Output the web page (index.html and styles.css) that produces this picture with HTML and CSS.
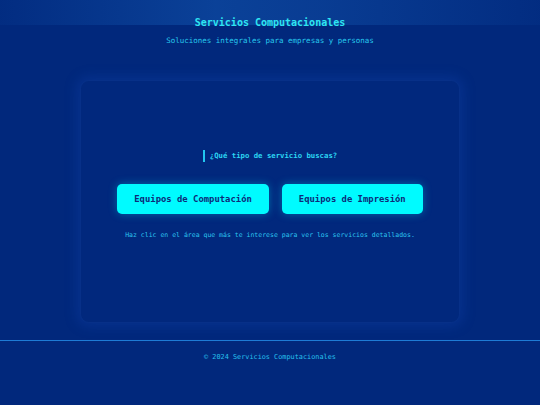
FILE: index.html
```html
<!DOCTYPE html>
<html lang="es">
<head>
<meta charset="utf-8">
<title>Servicios Computacionales</title>
<link rel="stylesheet" href="styles.css">
</head>
<body>
<header class="site-header">
  <h1 class="title">Servicios Computacionales</h1>
  <p class="subtitle">Soluciones integrales para empresas y personas</p>
</header>
<main class="main">
  <section class="card">
    <div class="question-wrap"><h2 class="question">¿Qué tipo de servicio buscas?</h2></div>
    <div class="buttons">
      <button class="btn">Equipos de Computación</button>
      <button class="btn">Equipos de Impresión</button>
    </div>
    <p class="hint">Haz clic en el área que más te interese para ver los servicios detallados.</p>
  </section>
</main>
<footer class="site-footer">© 2024 Servicios Computacionales</footer>
</body>
</html>
```
FILE: styles.css
```css
html, body {
  margin: 0;
  padding: 0;
}
body {
  background: #01287c;
  font-family: "DejaVu Sans Mono", "Liberation Mono", monospace;
  color: #22d3ee;
  width: 540px;
  height: 405px;
  overflow: hidden;
}
.site-header {
  padding-top: 17px;
  text-align: center;
  background-image: linear-gradient(90deg, rgba(10,70,160,0.15) 0%, rgba(20,90,180,0.5) 40%, rgba(20,90,180,0.4) 60%, rgba(10,70,160,0.15) 100%);
  background-size: 100% 25px;
  background-repeat: no-repeat;
}
.title {
  margin: 0;
  font-size: 10px;
  line-height: 12px;
  font-weight: bold;
  color: #2ee6f2;
}
.subtitle {
  margin: 7px 0 0;
  font-size: 7.5px;
  line-height: 10px;
  color: #27c8ee;
}
.main {
  padding-top: 34px;
}
.card {
  box-sizing: border-box;
  width: 380px;
  height: 243px;
  margin: 0 auto;
  padding-top: 69px;
  border-radius: 9px;
  background: #01287d;
  border: 1px solid rgba(40, 90, 190, 0.18);
  box-shadow: 0 0 12px 4px rgba(20, 70, 180, 0.3);
  text-align: center;
}
.question-wrap {
  display: flex;
  justify-content: center;
}
.question {
  margin: 0;
  padding-left: 5px;
  border-left: 2px solid #22c7f0;
  font-size: 7.3px;
  line-height: 12px;
  font-weight: bold;
  color: #2bd5f2;
}
.buttons {
  display: flex;
  justify-content: center;
  gap: 13px;
  margin-top: 22px;
}
.btn {
  height: 30px;
  padding: 0 17px;
  border: none;
  border-radius: 5px;
  background: #00fbff;
  color: #0d2a78;
  font-family: "DejaVu Sans Mono", "Liberation Mono", monospace;
  font-size: 8.9px;
  font-weight: bold;
  box-shadow: 0 0 8px rgba(0, 230, 255, 0.35);
}
.hint {
  margin: 17px 0 0;
  font-size: 6.5px;
  line-height: 8px;
  color: #2cc4ef;
}
.site-footer {
  margin-top: 17px;
  border-top: 1px solid #1e7cd6;
  padding-top: 11px;
  font-size: 6.85px;
  line-height: 10px;
  text-align: center;
  color: #27c0ee;
}
```
